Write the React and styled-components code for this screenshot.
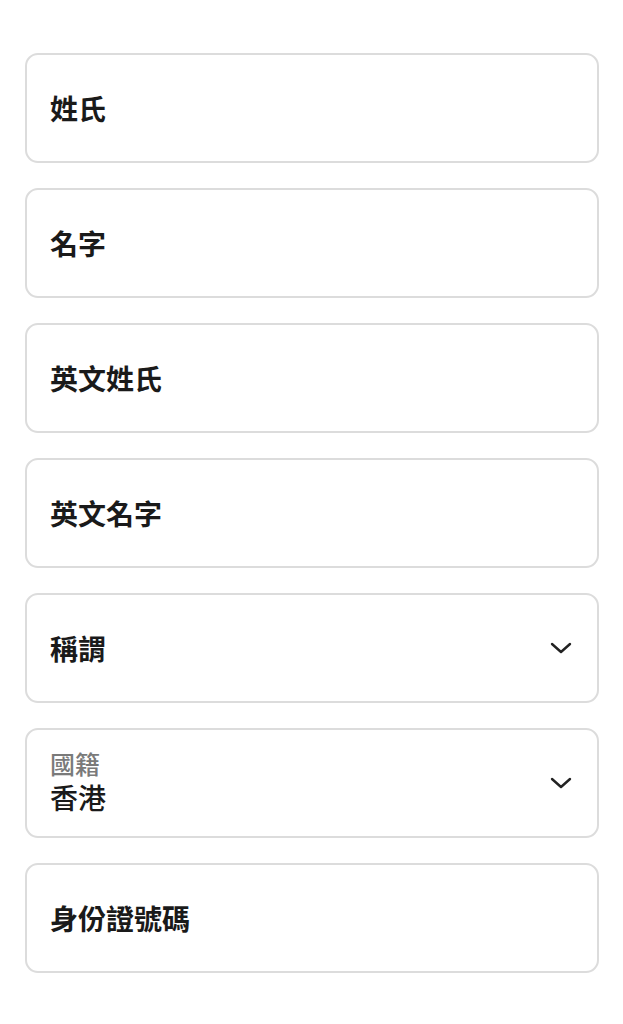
import React from "react";
import styled, { createGlobalStyle } from "styled-components";

const Global = createGlobalStyle`
  html, body { margin: 0; padding: 0; background: #ffffff; }
  body { font-family: "Noto Sans CJK TC", "Noto Sans CJK SC", sans-serif; }
`;

const Form = styled.div`
  display: flex;
  flex-direction: column;
  gap: 25px;
  padding: 53px 24px 0 25px;
`;

const Field = styled.div`
  box-sizing: border-box;
  height: 110px;
  border: 2px solid #dcdcdc;
  border-radius: 13px;
  background: #fff;
  display: flex;
  align-items: center;
  justify-content: space-between;
  padding: 0 24px 0 23px;
`;

const Texts = styled.div`
  display: flex;
  flex-direction: column;
  padding-bottom: ${(p) => (p.$stacked ? "4px" : "0")};
`;

const Label = styled.div`
  font-size: 28px;
  line-height: 36px;
  font-weight: 700;
  color: #1a1a1a;
`;

const SmallLabel = styled.div`
  font-size: 25px;
  line-height: 32px;
  font-weight: 500;
  color: #7a7a7a;
`;

const Value = styled.div`
  font-size: 28px;
  line-height: 36px;
  font-weight: 500;
  color: #1a1a1a;
`;

const Chevron = () => (
  <svg width="24" height="14" viewBox="0 0 24 14" fill="none">
    <path d="M3 3 L12 11 L21 3" stroke="#222" strokeWidth="2.4" strokeLinecap="round" strokeLinejoin="round" />
  </svg>
);

const fields = [
  { label: "姓氏" },
  { label: "名字" },
  { label: "英文姓氏" },
  { label: "英文名字" },
  { label: "稱謂", select: true },
  { label: "國籍", value: "香港", select: true },
  { label: "身份證號碼" },
];

export default function App() {
  return (
    <>
      <Global />
      <Form>
        {fields.map((f) => (
          <Field key={f.label}>
            <Texts $stacked={!!f.value}>
              {f.value ? (
                <>
                  <SmallLabel>{f.label}</SmallLabel>
                  <Value>{f.value}</Value>
                </>
              ) : (
                <Label>{f.label}</Label>
              )}
            </Texts>
            {f.select && <Chevron />}
          </Field>
        ))}
      </Form>
    </>
  );
}
